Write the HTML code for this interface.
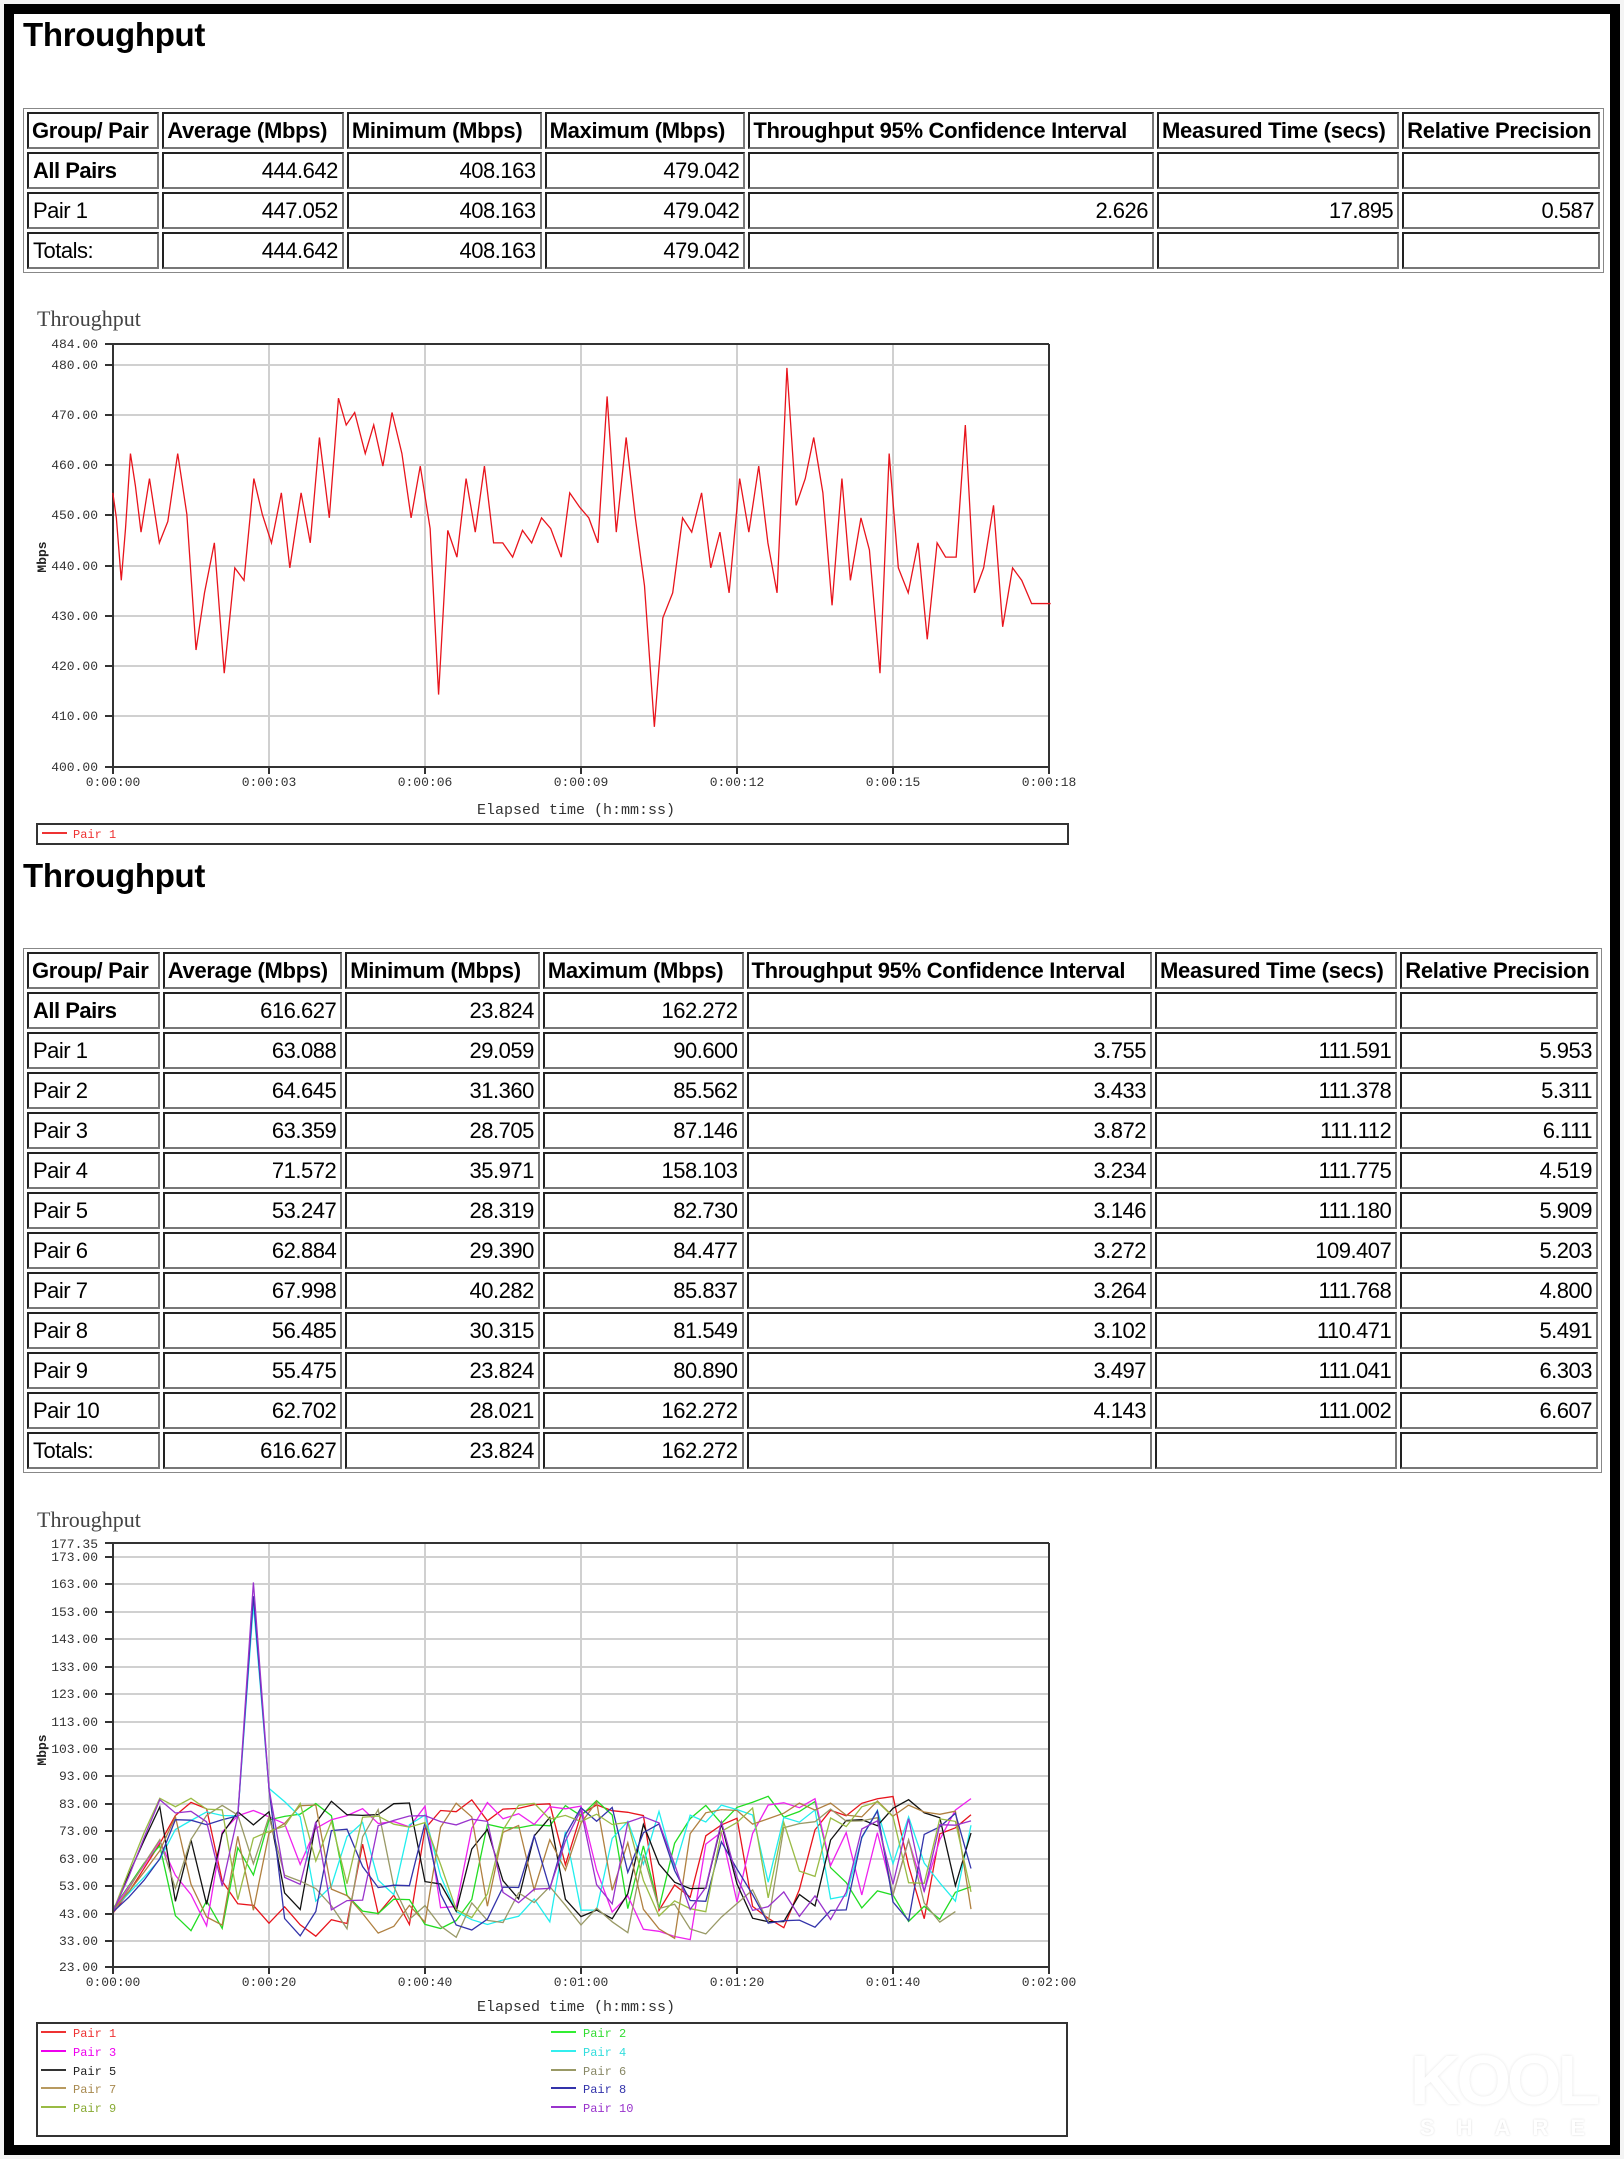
<!DOCTYPE html>
<html><head><meta charset="utf-8">
<style>
html,body{margin:0;padding:0;background:#f4f4f4;}
#page{position:relative;width:1624px;height:2159px;overflow:hidden;background:#f4f4f4;}
#frame{position:absolute;left:4px;top:4px;width:1596px;height:2131px;border:10px solid #000;background:#fff;}
.h{position:absolute;left:23px;font:bold 33px "Liberation Sans",sans-serif;color:#000;margin:0;letter-spacing:-0.3px;}
table{position:absolute;left:23px;border-collapse:separate;border-spacing:3px;border:1px solid #888;table-layout:fixed;}
td{border:2px solid #777;border-style:inset;height:33px;padding:0 4px;font:22px "Liberation Sans",sans-serif;color:#000;white-space:nowrap;overflow:hidden;text-align:right;letter-spacing:-0.5px;}
td.l{text-align:left;}
tr.hd td{font-weight:bold;text-align:left;letter-spacing:-0.3px;font-size:22px;padding:0 3px;}
td.b{font-weight:bold;}
svg text{font-family:"Liberation Mono",monospace;}
</style></head><body>
<div id="page">
<div id="frame"></div>

<div class="h" style="top:16px">Throughput</div>
<table style="top:108px;width:1581px">
<colgroup><col style="width:131px"><col style="width:180px"><col style="width:193px"><col style="width:199px"><col style="width:402px"><col style="width:240px"><col style="width:196px"></colgroup>
<tr class="hd"><td>Group/ Pair</td><td>Average (Mbps)</td><td>Minimum (Mbps)</td><td>Maximum (Mbps)</td><td>Throughput 95% Confidence Interval</td><td>Measured Time (secs)</td><td>Relative Precision</td></tr>
<tr><td class="l b">All Pairs</td><td>444.642</td><td>408.163</td><td>479.042</td><td></td><td></td><td></td></tr>
<tr><td class="l">Pair 1</td><td>447.052</td><td>408.163</td><td>479.042</td><td>2.626</td><td>17.895</td><td>0.587</td></tr>
<tr><td class="l">Totals:</td><td>444.642</td><td>408.163</td><td>479.042</td><td></td><td></td><td></td></tr>
</table>

<!-- Chart 1 -->
<svg style="position:absolute;left:0;top:300px" width="1100" height="560">
<text x="37" y="26" style="font-family:'Liberation Serif',serif" font-size="22" fill="#444">Throughput</text>
<g stroke="#d0d0d0" stroke-width="2">
<line x1="113" y1="65" x2="1049" y2="65"/><line x1="113" y1="115" x2="1049" y2="115"/><line x1="113" y1="165" x2="1049" y2="165"/><line x1="113" y1="215" x2="1049" y2="215"/><line x1="113" y1="266" x2="1049" y2="266"/><line x1="113" y1="316" x2="1049" y2="316"/><line x1="113" y1="366" x2="1049" y2="366"/><line x1="113" y1="416" x2="1049" y2="416"/>
<line x1="269" y1="44" x2="269" y2="467"/><line x1="425" y1="44" x2="425" y2="467"/><line x1="581" y1="44" x2="581" y2="467"/><line x1="737" y1="44" x2="737" y2="467"/><line x1="893" y1="44" x2="893" y2="467"/>
</g>
<g stroke="#333" stroke-width="2" fill="none">
<line x1="113" y1="44" x2="1049" y2="44"/><line x1="1049" y1="44" x2="1049" y2="467"/>
<line x1="113" y1="44" x2="113" y2="467"/><line x1="113" y1="467" x2="1049" y2="467"/>
<path d="M105 44h8M105 65h8M105 115h8M105 165h8M105 215h8M105 266h8M105 316h8M105 366h8M105 416h8M105 467h8M113 467v7M269 467v7M425 467v7M581 467v7M737 467v7M893 467v7M1049 467v7"/>
</g>
<g font-size="13" fill="#333" text-anchor="end">
<text x="98" y="48">484.00</text><text x="98" y="69">480.00</text><text x="98" y="119">470.00</text><text x="98" y="169">460.00</text><text x="98" y="219">450.00</text><text x="98" y="270">440.00</text><text x="98" y="320">430.00</text><text x="98" y="370">420.00</text><text x="98" y="420">410.00</text><text x="98" y="471">400.00</text>
</g>
<g font-size="13" fill="#333" text-anchor="middle">
<text x="113" y="486">0:00:00</text><text x="269" y="486">0:00:03</text><text x="425" y="486">0:00:06</text><text x="581" y="486">0:00:09</text><text x="737" y="486">0:00:12</text><text x="893" y="486">0:00:15</text><text x="1049" y="486">0:00:18</text>
<text x="576" y="514" font-size="15">Elapsed time (h:mm:ss)</text>
</g>
<text transform="translate(46,257) rotate(-90)" font-size="13" fill="#222" text-anchor="middle" font-weight="bold">Mbps</text>
<rect x="37" y="524" width="1031" height="20" fill="none" stroke="#333" stroke-width="2"/>
<line x1="42" y1="533" x2="67" y2="533" stroke="#e33" stroke-width="2"/>
<text x="73" y="538" font-size="12" fill="#e33">Pair 1</text>
</svg>
<svg style="position:absolute;left:0;top:300px" width="1100" height="560" viewBox="0 0 1560 1568" preserveAspectRatio="none">
<polyline fill="none" stroke="#e8141c" stroke-width="1.3" vector-effect="non-scaling-stroke" points="160,540 165,610 172,785 178,640 185,430 192,520 200,650 212,500 226,680 238,620 252,430 265,600 278,980 290,820 304,680 318,1045 333,750 346,785 360,500 372,600 385,680 399,540 411,750 427,540 440,680 453,385 467,610 480,275 491,350 503,315 518,430 530,350 543,465 556,315 570,430 583,610 596,465 610,640 622,1105 635,645 648,720 661,500 674,650 687,465 700,680 713,680 727,720 741,645 754,680 768,610 781,640 796,720 808,540 822,580 835,610 848,680 861,270 874,650 888,385 901,610 914,800 928,1195 940,890 954,820 968,610 981,650 995,540 1008,750 1021,650 1034,820 1049,500 1062,650 1076,465 1089,680 1102,820 1116,190 1129,575 1142,500 1154,385 1167,540 1180,855 1194,500 1206,785 1221,610 1233,700 1248,1045 1261,430 1274,750 1288,820 1302,680 1315,950 1329,680 1341,720 1356,720 1369,350 1382,820 1395,750 1409,575 1422,915 1436,750 1449,785 1463,850 1490,850"/>
</svg>

<div class="h" style="top:857px">Throughput</div>
<table style="top:948px;width:1579px">
<colgroup><col style="width:131px"><col style="width:177px"><col style="width:192px"><col style="width:198px"><col style="width:400px"><col style="width:239px"><col style="width:195px"></colgroup>
<tr class="hd"><td>Group/ Pair</td><td>Average (Mbps)</td><td>Minimum (Mbps)</td><td>Maximum (Mbps)</td><td>Throughput 95% Confidence Interval</td><td>Measured Time (secs)</td><td>Relative Precision</td></tr>
<tr><td class="l b">All Pairs</td><td>616.627</td><td>23.824</td><td>162.272</td><td></td><td></td><td></td></tr>
<tr><td class="l">Pair 1</td><td>63.088</td><td>29.059</td><td>90.600</td><td>3.755</td><td>111.591</td><td>5.953</td></tr>
<tr><td class="l">Pair 2</td><td>64.645</td><td>31.360</td><td>85.562</td><td>3.433</td><td>111.378</td><td>5.311</td></tr>
<tr><td class="l">Pair 3</td><td>63.359</td><td>28.705</td><td>87.146</td><td>3.872</td><td>111.112</td><td>6.111</td></tr>
<tr><td class="l">Pair 4</td><td>71.572</td><td>35.971</td><td>158.103</td><td>3.234</td><td>111.775</td><td>4.519</td></tr>
<tr><td class="l">Pair 5</td><td>53.247</td><td>28.319</td><td>82.730</td><td>3.146</td><td>111.180</td><td>5.909</td></tr>
<tr><td class="l">Pair 6</td><td>62.884</td><td>29.390</td><td>84.477</td><td>3.272</td><td>109.407</td><td>5.203</td></tr>
<tr><td class="l">Pair 7</td><td>67.998</td><td>40.282</td><td>85.837</td><td>3.264</td><td>111.768</td><td>4.800</td></tr>
<tr><td class="l">Pair 8</td><td>56.485</td><td>30.315</td><td>81.549</td><td>3.102</td><td>110.471</td><td>5.491</td></tr>
<tr><td class="l">Pair 9</td><td>55.475</td><td>23.824</td><td>80.890</td><td>3.497</td><td>111.041</td><td>6.303</td></tr>
<tr><td class="l">Pair 10</td><td>62.702</td><td>28.021</td><td>162.272</td><td>4.143</td><td>111.002</td><td>6.607</td></tr>
<tr><td class="l">Totals:</td><td>616.627</td><td>23.824</td><td>162.272</td><td></td><td></td><td></td></tr>
</table>

<!-- Chart 2 -->
<svg id="c2" style="position:absolute;left:0;top:1490px" width="1100" height="660">
<text x="37" y="37" style="font-family:'Liberation Serif',serif" font-size="22" fill="#444">Throughput</text>
<g stroke="#d0d0d0" stroke-width="2">
<line x1="113" y1="67" x2="1049" y2="67"/><line x1="113" y1="94" x2="1049" y2="94"/><line x1="113" y1="122" x2="1049" y2="122"/><line x1="113" y1="149" x2="1049" y2="149"/><line x1="113" y1="177" x2="1049" y2="177"/><line x1="113" y1="204" x2="1049" y2="204"/><line x1="113" y1="232" x2="1049" y2="232"/><line x1="113" y1="259" x2="1049" y2="259"/><line x1="113" y1="286" x2="1049" y2="286"/><line x1="113" y1="314" x2="1049" y2="314"/><line x1="113" y1="341" x2="1049" y2="341"/><line x1="113" y1="369" x2="1049" y2="369"/><line x1="113" y1="396" x2="1049" y2="396"/><line x1="113" y1="424" x2="1049" y2="424"/><line x1="113" y1="451" x2="1049" y2="451"/>
<line x1="269" y1="53" x2="269" y2="477"/><line x1="425" y1="53" x2="425" y2="477"/><line x1="581" y1="53" x2="581" y2="477"/><line x1="737" y1="53" x2="737" y2="477"/><line x1="893" y1="53" x2="893" y2="477"/>
</g>
<g id="lines"></g>
<g stroke="#333" stroke-width="2" fill="none">
<line x1="113" y1="53" x2="1049" y2="53"/><line x1="1049" y1="53" x2="1049" y2="477"/>
<line x1="113" y1="53" x2="113" y2="477"/><line x1="113" y1="477" x2="1049" y2="477"/>
<path d="M105 53h8M105 67h8M105 94h8M105 122h8M105 149h8M105 177h8M105 204h8M105 232h8M105 259h8M105 286h8M105 314h8M105 341h8M105 369h8M105 396h8M105 424h8M105 451h8M105 477h8M113 477v7M269 477v7M425 477v7M581 477v7M737 477v7M893 477v7M1049 477v7"/>
</g>
<g font-size="13" fill="#333" text-anchor="end">
<text x="98" y="58">177.35</text><text x="98" y="71">173.00</text><text x="98" y="98">163.00</text><text x="98" y="126">153.00</text><text x="98" y="153">143.00</text><text x="98" y="181">133.00</text><text x="98" y="208">123.00</text><text x="98" y="236">113.00</text><text x="98" y="263">103.00</text><text x="98" y="290">93.00</text><text x="98" y="318">83.00</text><text x="98" y="345">73.00</text><text x="98" y="373">63.00</text><text x="98" y="400">53.00</text><text x="98" y="428">43.00</text><text x="98" y="455">33.00</text><text x="98" y="481">23.00</text>
</g>
<g font-size="13" fill="#333" text-anchor="middle">
<text x="113" y="496">0:00:00</text><text x="269" y="496">0:00:20</text><text x="425" y="496">0:00:40</text><text x="581" y="496">0:01:00</text><text x="737" y="496">0:01:20</text><text x="893" y="496">0:01:40</text><text x="1049" y="496">0:02:00</text>
<text x="576" y="521" font-size="15">Elapsed time (h:mm:ss)</text>
</g>
<text transform="translate(46,260) rotate(-90)" font-size="13" fill="#222" text-anchor="middle" font-weight="bold">Mbps</text>
<rect x="37" y="533" width="1030" height="113" fill="none" stroke="#333" stroke-width="2"/>
<g stroke-width="2">
<line x1="41" y1="542" x2="66" y2="542" stroke="#e33"/><line x1="41" y1="561" x2="66" y2="561" stroke="#e0e"/><line x1="41" y1="580" x2="66" y2="580" stroke="#333"/><line x1="41" y1="598" x2="66" y2="598" stroke="#b89a60"/><line x1="41" y1="617" x2="66" y2="617" stroke="#9b4"/>
<line x1="551" y1="542" x2="576" y2="542" stroke="#3e3"/><line x1="551" y1="561" x2="576" y2="561" stroke="#3ee"/><line x1="551" y1="580" x2="576" y2="580" stroke="#996"/><line x1="551" y1="598" x2="576" y2="598" stroke="#33a"/><line x1="551" y1="617" x2="576" y2="617" stroke="#93c"/>
</g>
<g font-size="12">
<text x="73" y="547" fill="#e33">Pair 1</text><text x="73" y="566" fill="#e0e">Pair 3</text><text x="73" y="585" fill="#222">Pair 5</text><text x="73" y="603" fill="#a88a50">Pair 7</text><text x="73" y="622" fill="#8a3">Pair 9</text>
<text x="583" y="547" fill="#3d3">Pair 2</text><text x="583" y="566" fill="#3dd">Pair 4</text><text x="583" y="585" fill="#886">Pair 6</text><text x="583" y="603" fill="#33a">Pair 8</text><text x="583" y="622" fill="#93c">Pair 10</text>
</g>
</svg>

<div style="position:absolute;left:1410px;top:2040px;font:bold 70px 'Liberation Sans',sans-serif;color:#fff;text-shadow:0 0 3px #e4e4e4;letter-spacing:-4px;">KOOL</div>
<div style="position:absolute;left:1420px;top:2115px;font:bold 22px 'Liberation Sans',sans-serif;color:#fff;text-shadow:0 0 2px #d8d8d8;letter-spacing:22px;">SHARE</div>
</div>
<script>
(function(){
var s=424242;function r(){s=(s*1103515245+12345)%2147483648;return s/2147483648;}
var cols=["#e8141c","#22dd22","#ee22ee","#22eeee","#111111","#999966","#b08040","#3333aa","#99bb44","#9933cc"];
var g=document.getElementById('lines');var X0=113,PX=7.8,Y0=477,PY=2.747;
for(var p=0;p<10;p++){var pts=[];var v=43;var end=p==5?109:111;var hi=r()<0.5;var start=hi?78:55+r()*10;
for(var t=0;t<=end;t+=2){
 if(t==0)v=42+r()*3;else if(t<=6)v=v+(start-43)/3+r()*3;
 else{ if(r()<0.3)hi=!hi; var target=hi?(73+r()*13):(32+r()*24); v=v+(target-v)*0.75;}
 var val=v;
 if((p==7||p==9||p==3)&&t==18)val=p==9?163:(p==3?155:158);
 if((p==7||p==9||p==3)&&t==20){val=88;}
 if((p==7||p==9||p==3)&&t==16)val=78;
 pts.push((X0+t*PX).toFixed(1)+","+(Y0-(val-23)*PY).toFixed(1));}
var e=document.createElementNS("http://www.w3.org/2000/svg","polyline");
e.setAttribute("points",pts.join(" "));e.setAttribute("fill","none");e.setAttribute("stroke",cols[p]);e.setAttribute("stroke-width","1.3");g.appendChild(e);}
})();
</script>
</body></html>
